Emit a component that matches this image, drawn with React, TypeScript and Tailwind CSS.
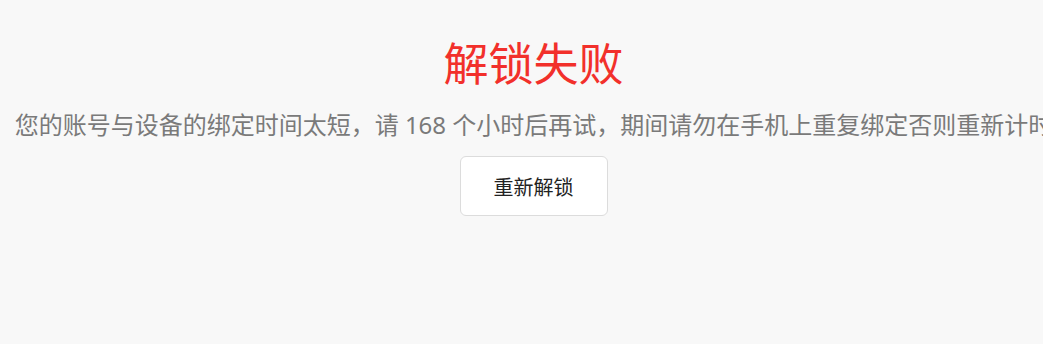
import React from "react";

const App = () => {
  return (
    <div
      className="min-h-screen w-full overflow-hidden bg-[#f8f8f8] pl-[13px] pt-[30px]"
      style={{ fontFamily: '"Noto Sans", "Noto Sans CJK SC", sans-serif' }}
    >
      <div className="w-[1041px]">
        {/* Result header */}
        <h1 className="text-center text-[45px] font-normal leading-[68px] text-[#f2302b]">
          解锁失败
        </h1>
        <p className="mt-[9px] whitespace-nowrap text-center text-[24px] leading-[36px] text-[#7a7a7a]">
          您的账号与设备的绑定时间太短，请 168 个小时后再试，期间请勿在手机上重复绑定否则重新计时
        </p>

        {/* Retry */}
        <div className="mt-[13px] flex justify-center">
          <button
            type="button"
            className="flex h-[60px] w-[148px] items-center justify-center rounded-[6px] border border-[#dcdcdc] bg-white pt-[3px] text-[20px] text-[#222222]"
          >
            重新解锁
          </button>
        </div>
      </div>
    </div>
  );
};

export default App;
